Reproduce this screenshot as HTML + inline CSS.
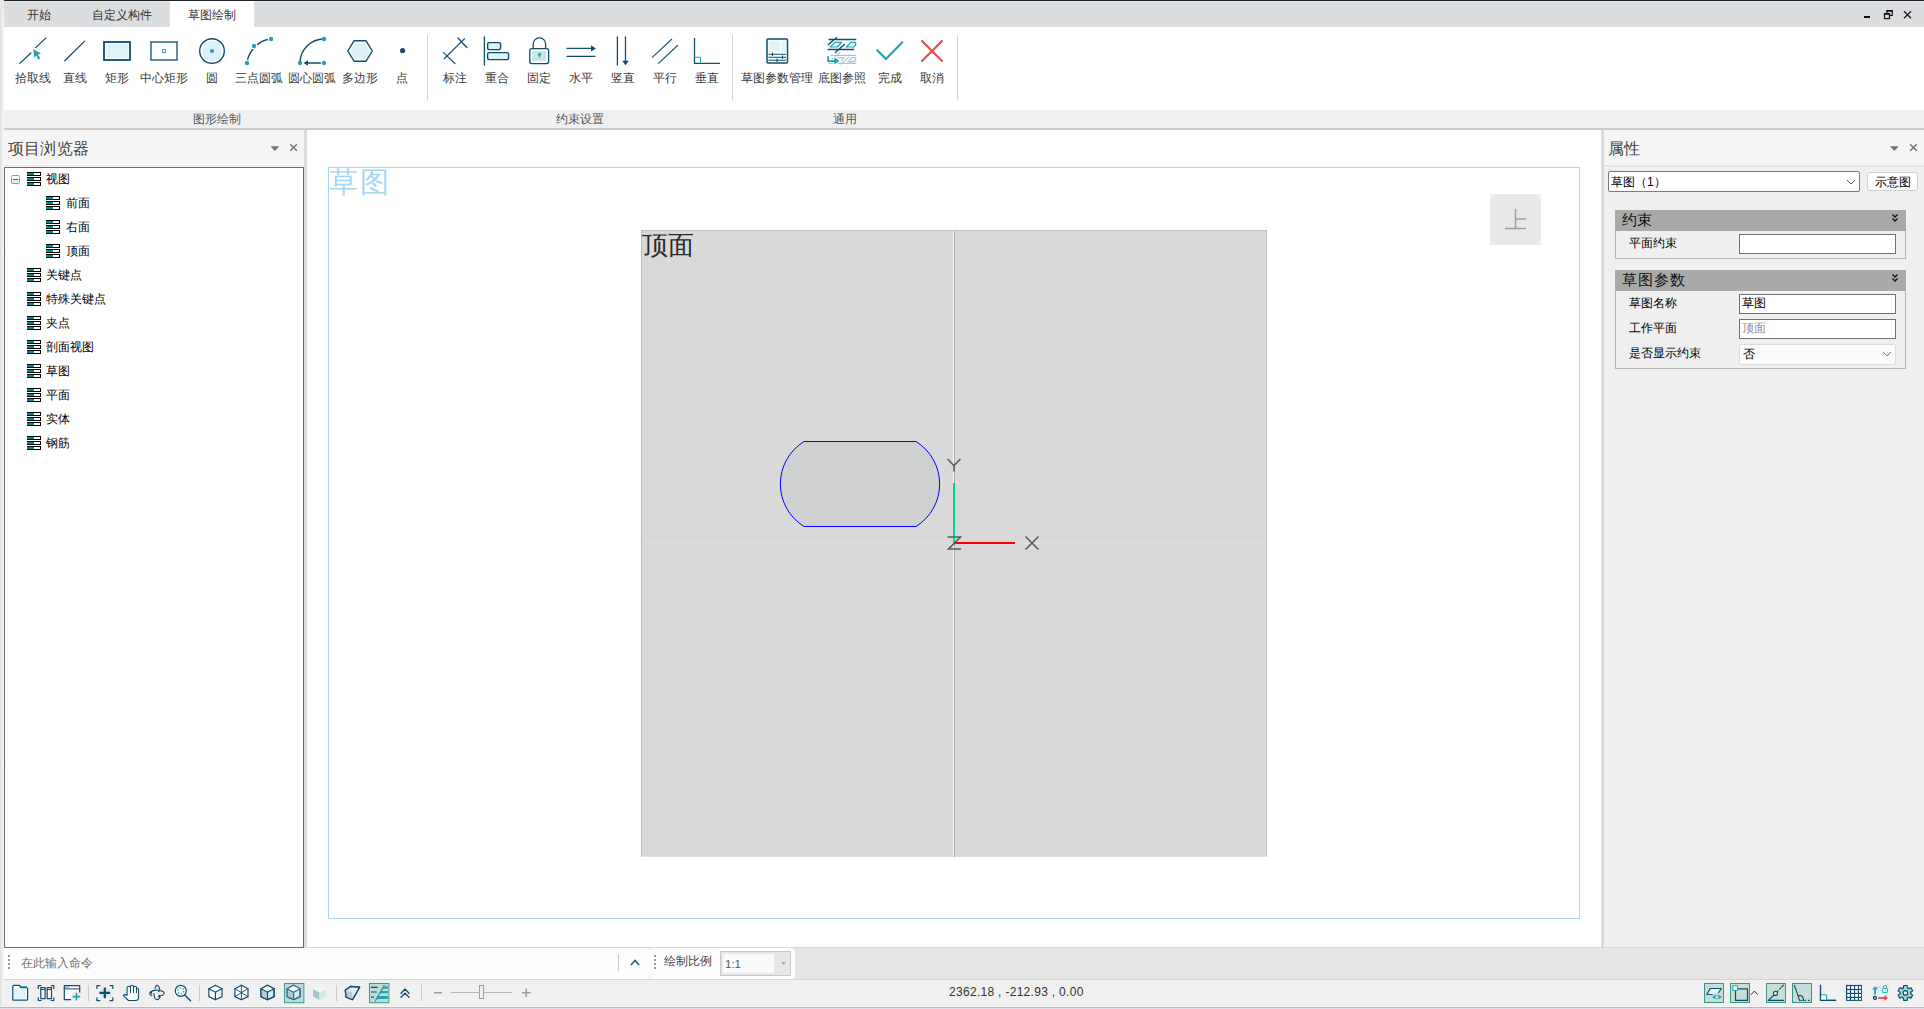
<!DOCTYPE html>
<html><head><meta charset="utf-8">
<style>
*{box-sizing:border-box;margin:0;padding:0}
html,body{width:1924px;height:1009px;overflow:hidden}
body{position:relative;background:#f0f0f0;font-family:"Liberation Sans",sans-serif;font-size:12px;color:#222}
.a{position:absolute}
.t{position:absolute;white-space:nowrap;line-height:1}
svg{position:absolute;overflow:visible}
</style></head><body>
<!-- window frame -->
<div class="a" style="left:0;top:0;width:4px;height:1009px;background:linear-gradient(to right,#dadada,#ececec 40%,#f5f5f5)"></div>
<div class="a" style="left:0;top:0;width:4px;height:9px;background:#e7e7e7"></div>
<div class="a" style="left:4px;top:0;width:1920px;height:1px;background:#1c2127"></div>
<!-- tab bar -->
<div class="a" id="tabbar" style="left:4px;top:1px;width:1920px;height:26px;background:#dcdddf"></div>
<div class="a" style="left:4px;top:1px;width:1920px;height:1px;background:#e4e5e7"></div>
<div class="a" style="left:170px;top:1px;width:84px;height:26px;background:#fff"></div>
<div class="t" style="left:27px;top:9px;font-size:12px;color:#333">开始</div>
<div class="t" style="left:92px;top:9px;font-size:12px;color:#333">自定义构件</div>
<div class="t" style="left:188px;top:9px;font-size:12px;color:#333">草图绘制</div>
<!-- ribbon -->
<div class="a" id="ribbon" style="left:4px;top:27px;width:1920px;height:83px;background:#fff"></div>
<div class="a" style="left:4px;top:110px;width:1920px;height:18px;background:#eef0f1"></div>
<div class="a" style="left:4px;top:128px;width:1920px;height:2px;background:#cbcbcb"></div>

<!-- ribbon icons -->
<svg style="left:0;top:0" width="1924" height="110" viewBox="0 0 1924 110">
<g fill="none" stroke="#0f4c6e" stroke-width="1.3" stroke-linecap="round" stroke-linejoin="round">
 <!-- pick line -->
 <path d="M19.8 63.4L30.9 53M35.7 47.6L45.8 38.1"/>
 <!-- line -->
 <path d="M64.7 60.7L84.7 41.1"/>
 <!-- rect -->
 <rect x="104" y="42" width="26" height="18" stroke-width="1.8" stroke-linecap="butt" stroke-linejoin="miter"/>
 <!-- center rect -->
 <rect x="151" y="42" width="26" height="18" stroke-linejoin="miter"/>
 <!-- circle -->
 <circle cx="212" cy="51" r="12.3" stroke-width="1.4"/>
 <!-- 3 point arc -->
 <path d="M247 63C248 52 258 40 271 39" stroke-width="1.4"/>
 <!-- center arc -->
 <path d="M300 63A24 24 0 0 1 324 39" stroke-width="1.4"/>
 <path d="M320.5 63H306" stroke-width="1.5"/>
 <!-- hexagon -->
 <path d="M347.8 51L354.2 40.7H365.9L372.3 51L365.9 61.3H354.2Z" stroke-width="1.4"/>
 <!-- dimension -->
 <path d="M444.2 58.7L464.6 38.6M443.5 52.6L455.1 63.6M458 38L466.8 47.5" stroke-width="1.2"/>
 <!-- coincident -->
 <path d="M484.4 37V65"/>
 <rect x="487.6" y="42.6" width="13" height="7" rx="1.5" fill="#dff6f8" stroke-width="1.4"/>
 <rect x="487.6" y="52.6" width="21" height="7" rx="1.5" fill="#dff6f8" stroke-width="1.4"/>
 <!-- lock -->
 <path d="M533.2 48.5V44A6.2 6.2 0 0 1 545.6 44V48.5"/>
 <rect x="529.8" y="48.6" width="18.8" height="15" rx="2"/>
 <!-- horizontal -->
 <path d="M567 48.4H591.5M567 56.3H595"/>
 <!-- vertical -->
 <path d="M617.4 37V65M625.5 37V61.5"/>
 <!-- parallel -->
 <path d="M652.3 57.4L671.7 39.3M658.5 63.4L677.5 45.5" stroke-width="1.2" stroke="#1d5a7c"/>
 <!-- perpendicular -->
 <path d="M694.5 38V63.4H720" stroke-linecap="butt"/>
 <!-- sketch params -->
 <rect x="767" y="39" width="20.5" height="24" rx="1" stroke-width="1.5"/>
 <path d="M768.5 54.2H786M768.5 57.3H786M768.5 60.3H786M772.5 52.5V56M782.5 55.5V59M777 58.5V62" stroke-width="1.1" stroke-linecap="butt"/>
 <!-- underlay -->
 <path d="M829.1 39.5H855.7M828.2 49.5H853.6M828.2 44.7L836.6 37.4M835.4 52.5L844.5 44.3" stroke-width="1.3"/>
</g>
<g fill="#dff6f8" stroke="none">
 <rect x="106" y="44" width="22" height="14"/>
 <circle cx="212" cy="51" r="10.2" fill="#dff1f8"/>
 <path d="M350.2 51L355.3 42.7H364.8L369.9 51L364.8 59.3H355.3Z" fill="#dff1f8"/>
 <rect x="768.5" y="40.5" width="11.5" height="11.5"/>
 <rect x="781.5" y="40.5" width="4.5" height="11.5"/>
 <rect x="532.2" y="51" width="14" height="10.2" rx="1" fill="#c8e5e9"/>
</g>
<g fill="#0f4c6e">
 <circle cx="402.6" cy="50.5" r="2.6"/>
 <path d="M303.6 63L308 60.3V65.7Z"/>
 <path d="M591 45.3L595.8 48.4L591 51.5Z"/>
 <path d="M622.2 60.8H628.8L625.5 65.3Z"/>
</g>
<g fill="#22a3ae">
 <path d="M33.2 49L41 53.6L38 54.6L40.3 58.4L38.3 59.5L36.2 55.6L34.3 58Z"/>
 <rect x="162.6" y="49.6" width="3" height="3" fill="none" stroke="#22a3ae" stroke-width="1"/>
 <circle cx="212" cy="51" r="2.1"/>
 <circle cx="247" cy="63" r="3.3" fill="#fff"/><circle cx="254" cy="46" r="3.3" fill="#fff"/><circle cx="271" cy="39" r="3.3" fill="#fff"/>
 <circle cx="247" cy="63" r="2.2"/><circle cx="254" cy="46" r="2.2"/><circle cx="271" cy="39" r="2.2"/>
 <circle cx="300" cy="63" r="2.2"/><circle cx="324" cy="63" r="2.2"/><circle cx="324" cy="39" r="2.2"/>
 <circle cx="539.5" cy="54.2" r="1.5"/><rect x="538.9" y="54.5" width="1.3" height="3"/>
 <path d="M694.5 57.3H700.5V63.4" fill="none" stroke="#22a3ae" stroke-width="1"/>
 <path d="M830.2 47L834.8 42.3H841.6L837.3 47Z M846.3 47L850.9 42.3H855.7V45.2L853.4 47Z" fill="#e3f7f9" stroke="#22a3ae" stroke-width="1.2" stroke-linejoin="round"/>
 <path d="M828.2 56.3V61.2H835" fill="none" stroke="#22a3ae" stroke-width="1.8"/>
 <path d="M834.3 57.2L839.5 60.9L834.3 64.6Z"/>
 <circle cx="832.3" cy="58.4" r="0.6"/>
</g>
<g fill="none" stroke="#a9c4d2" stroke-width="1.1" stroke-linecap="round">
 <path d="M834.1 55.4H855.7M831 55.4H833M838.4 63.4H855.7M829 63.4H832.7M840.6 64.1L848.6 57.3M835.4 56.3L839.7 52.3"/>
 <path d="M848.2 61.6L852 57.5H855.7V60.2L854.1 61.6Z M837.3 57.5H843.8L841.4 60.5" fill="#eefafb"/>
</g>
<path d="M877.2 50.2L885.9 58.9L902.3 42.2" fill="none" stroke="#27a6b0" stroke-width="2.2" stroke-linecap="round" stroke-linejoin="miter"/>
<path d="M922 41L942 61M942 41L922 61" fill="none" stroke="#e84c4c" stroke-width="2.2" stroke-linecap="round"/>
<g fill="#d4d4d4"><rect x="427" y="35" width="1" height="65"/><rect x="732" y="35" width="1" height="65"/><rect x="957" y="35" width="1" height="65"/></g>
</svg>
<div class="t" style="left:15px;top:72px;color:#3a3a3a">拾取线</div>
<div class="t" style="left:63px;top:72px;color:#3a3a3a">直线</div>
<div class="t" style="left:105px;top:72px;color:#3a3a3a">矩形</div>
<div class="t" style="left:140px;top:72px;color:#3a3a3a">中心矩形</div>
<div class="t" style="left:206px;top:72px;color:#3a3a3a">圆</div>
<div class="t" style="left:235px;top:72px;color:#3a3a3a">三点圆弧</div>
<div class="t" style="left:288px;top:72px;color:#3a3a3a">圆心圆弧</div>
<div class="t" style="left:342px;top:72px;color:#3a3a3a">多边形</div>
<div class="t" style="left:396px;top:72px;color:#3a3a3a">点</div>
<div class="t" style="left:443px;top:72px;color:#3a3a3a">标注</div>
<div class="t" style="left:485px;top:72px;color:#3a3a3a">重合</div>
<div class="t" style="left:527px;top:72px;color:#3a3a3a">固定</div>
<div class="t" style="left:569px;top:72px;color:#3a3a3a">水平</div>
<div class="t" style="left:611px;top:72px;color:#3a3a3a">竖直</div>
<div class="t" style="left:653px;top:72px;color:#3a3a3a">平行</div>
<div class="t" style="left:695px;top:72px;color:#3a3a3a">垂直</div>
<div class="t" style="left:741px;top:72px;color:#3a3a3a">草图参数管理</div>
<div class="t" style="left:818px;top:72px;color:#3a3a3a">底图参照</div>
<div class="t" style="left:878px;top:72px;color:#3a3a3a">完成</div>
<div class="t" style="left:920px;top:72px;color:#3a3a3a">取消</div>
<div class="t" style="left:193px;top:113px;color:#555">图形绘制</div>
<div class="t" style="left:556px;top:113px;color:#555">约束设置</div>
<div class="t" style="left:833px;top:113px;color:#555">通用</div>
<!-- left panel -->
<div class="a" style="left:4px;top:130px;width:300px;height:818px;background:#f5f5f5"></div>
<div class="a" style="left:4px;top:165px;width:300px;height:1px;background:#e6e6e6"></div>
<div class="t" style="left:8px;top:141px;font-size:16px;letter-spacing:0.2px;color:#444">项目浏览器</div>
<div class="a" style="left:4px;top:167px;width:300px;height:781px;background:#fff;border:1px solid #6b6b6b"></div>
<!-- tree -->
<svg style="left:27px;top:172px" width="14" height="14" viewBox="0 0 14 14" shape-rendering="crispEdges"><rect x="0" y="0" width="14" height="4" fill="#000"/><rect x="0" y="1" width="7" height="2" fill="#008c8c"/><rect x="7" y="1" width="6" height="2" fill="#fff"/><rect x="0" y="5" width="14" height="4" fill="#000"/><rect x="0" y="6" width="7" height="2" fill="#008c8c"/><rect x="7" y="6" width="6" height="2" fill="#fff"/><rect x="0" y="10" width="14" height="4" fill="#000"/><rect x="0" y="11" width="7" height="2" fill="#008c8c"/><rect x="7" y="11" width="6" height="2" fill="#fff"/></svg>
<div class="t" style="left:46px;top:173px;color:#000">视图</div>
<svg style="left:46px;top:196px" width="14" height="14" viewBox="0 0 14 14" shape-rendering="crispEdges"><rect x="0" y="0" width="14" height="4" fill="#000"/><rect x="0" y="1" width="7" height="2" fill="#008c8c"/><rect x="7" y="1" width="6" height="2" fill="#fff"/><rect x="0" y="5" width="14" height="4" fill="#000"/><rect x="0" y="6" width="7" height="2" fill="#008c8c"/><rect x="7" y="6" width="6" height="2" fill="#fff"/><rect x="0" y="10" width="14" height="4" fill="#000"/><rect x="0" y="11" width="7" height="2" fill="#008c8c"/><rect x="7" y="11" width="6" height="2" fill="#fff"/></svg>
<div class="t" style="left:66px;top:197px;color:#000">前面</div>
<svg style="left:46px;top:220px" width="14" height="14" viewBox="0 0 14 14" shape-rendering="crispEdges"><rect x="0" y="0" width="14" height="4" fill="#000"/><rect x="0" y="1" width="7" height="2" fill="#008c8c"/><rect x="7" y="1" width="6" height="2" fill="#fff"/><rect x="0" y="5" width="14" height="4" fill="#000"/><rect x="0" y="6" width="7" height="2" fill="#008c8c"/><rect x="7" y="6" width="6" height="2" fill="#fff"/><rect x="0" y="10" width="14" height="4" fill="#000"/><rect x="0" y="11" width="7" height="2" fill="#008c8c"/><rect x="7" y="11" width="6" height="2" fill="#fff"/></svg>
<div class="t" style="left:66px;top:221px;color:#000">右面</div>
<svg style="left:46px;top:244px" width="14" height="14" viewBox="0 0 14 14" shape-rendering="crispEdges"><rect x="0" y="0" width="14" height="4" fill="#000"/><rect x="0" y="1" width="7" height="2" fill="#008c8c"/><rect x="7" y="1" width="6" height="2" fill="#fff"/><rect x="0" y="5" width="14" height="4" fill="#000"/><rect x="0" y="6" width="7" height="2" fill="#008c8c"/><rect x="7" y="6" width="6" height="2" fill="#fff"/><rect x="0" y="10" width="14" height="4" fill="#000"/><rect x="0" y="11" width="7" height="2" fill="#008c8c"/><rect x="7" y="11" width="6" height="2" fill="#fff"/></svg>
<div class="t" style="left:66px;top:245px;color:#000">顶面</div>
<svg style="left:27px;top:268px" width="14" height="14" viewBox="0 0 14 14" shape-rendering="crispEdges"><rect x="0" y="0" width="14" height="4" fill="#000"/><rect x="0" y="1" width="7" height="2" fill="#008c8c"/><rect x="7" y="1" width="6" height="2" fill="#fff"/><rect x="0" y="5" width="14" height="4" fill="#000"/><rect x="0" y="6" width="7" height="2" fill="#008c8c"/><rect x="7" y="6" width="6" height="2" fill="#fff"/><rect x="0" y="10" width="14" height="4" fill="#000"/><rect x="0" y="11" width="7" height="2" fill="#008c8c"/><rect x="7" y="11" width="6" height="2" fill="#fff"/></svg>
<div class="t" style="left:46px;top:269px;color:#000">关键点</div>
<svg style="left:27px;top:292px" width="14" height="14" viewBox="0 0 14 14" shape-rendering="crispEdges"><rect x="0" y="0" width="14" height="4" fill="#000"/><rect x="0" y="1" width="7" height="2" fill="#008c8c"/><rect x="7" y="1" width="6" height="2" fill="#fff"/><rect x="0" y="5" width="14" height="4" fill="#000"/><rect x="0" y="6" width="7" height="2" fill="#008c8c"/><rect x="7" y="6" width="6" height="2" fill="#fff"/><rect x="0" y="10" width="14" height="4" fill="#000"/><rect x="0" y="11" width="7" height="2" fill="#008c8c"/><rect x="7" y="11" width="6" height="2" fill="#fff"/></svg>
<div class="t" style="left:46px;top:293px;color:#000">特殊关键点</div>
<svg style="left:27px;top:316px" width="14" height="14" viewBox="0 0 14 14" shape-rendering="crispEdges"><rect x="0" y="0" width="14" height="4" fill="#000"/><rect x="0" y="1" width="7" height="2" fill="#008c8c"/><rect x="7" y="1" width="6" height="2" fill="#fff"/><rect x="0" y="5" width="14" height="4" fill="#000"/><rect x="0" y="6" width="7" height="2" fill="#008c8c"/><rect x="7" y="6" width="6" height="2" fill="#fff"/><rect x="0" y="10" width="14" height="4" fill="#000"/><rect x="0" y="11" width="7" height="2" fill="#008c8c"/><rect x="7" y="11" width="6" height="2" fill="#fff"/></svg>
<div class="t" style="left:46px;top:317px;color:#000">夹点</div>
<svg style="left:27px;top:340px" width="14" height="14" viewBox="0 0 14 14" shape-rendering="crispEdges"><rect x="0" y="0" width="14" height="4" fill="#000"/><rect x="0" y="1" width="7" height="2" fill="#008c8c"/><rect x="7" y="1" width="6" height="2" fill="#fff"/><rect x="0" y="5" width="14" height="4" fill="#000"/><rect x="0" y="6" width="7" height="2" fill="#008c8c"/><rect x="7" y="6" width="6" height="2" fill="#fff"/><rect x="0" y="10" width="14" height="4" fill="#000"/><rect x="0" y="11" width="7" height="2" fill="#008c8c"/><rect x="7" y="11" width="6" height="2" fill="#fff"/></svg>
<div class="t" style="left:46px;top:341px;color:#000">剖面视图</div>
<svg style="left:27px;top:364px" width="14" height="14" viewBox="0 0 14 14" shape-rendering="crispEdges"><rect x="0" y="0" width="14" height="4" fill="#000"/><rect x="0" y="1" width="7" height="2" fill="#008c8c"/><rect x="7" y="1" width="6" height="2" fill="#fff"/><rect x="0" y="5" width="14" height="4" fill="#000"/><rect x="0" y="6" width="7" height="2" fill="#008c8c"/><rect x="7" y="6" width="6" height="2" fill="#fff"/><rect x="0" y="10" width="14" height="4" fill="#000"/><rect x="0" y="11" width="7" height="2" fill="#008c8c"/><rect x="7" y="11" width="6" height="2" fill="#fff"/></svg>
<div class="t" style="left:46px;top:365px;color:#000">草图</div>
<svg style="left:27px;top:388px" width="14" height="14" viewBox="0 0 14 14" shape-rendering="crispEdges"><rect x="0" y="0" width="14" height="4" fill="#000"/><rect x="0" y="1" width="7" height="2" fill="#008c8c"/><rect x="7" y="1" width="6" height="2" fill="#fff"/><rect x="0" y="5" width="14" height="4" fill="#000"/><rect x="0" y="6" width="7" height="2" fill="#008c8c"/><rect x="7" y="6" width="6" height="2" fill="#fff"/><rect x="0" y="10" width="14" height="4" fill="#000"/><rect x="0" y="11" width="7" height="2" fill="#008c8c"/><rect x="7" y="11" width="6" height="2" fill="#fff"/></svg>
<div class="t" style="left:46px;top:389px;color:#000">平面</div>
<svg style="left:27px;top:412px" width="14" height="14" viewBox="0 0 14 14" shape-rendering="crispEdges"><rect x="0" y="0" width="14" height="4" fill="#000"/><rect x="0" y="1" width="7" height="2" fill="#008c8c"/><rect x="7" y="1" width="6" height="2" fill="#fff"/><rect x="0" y="5" width="14" height="4" fill="#000"/><rect x="0" y="6" width="7" height="2" fill="#008c8c"/><rect x="7" y="6" width="6" height="2" fill="#fff"/><rect x="0" y="10" width="14" height="4" fill="#000"/><rect x="0" y="11" width="7" height="2" fill="#008c8c"/><rect x="7" y="11" width="6" height="2" fill="#fff"/></svg>
<div class="t" style="left:46px;top:413px;color:#000">实体</div>
<svg style="left:27px;top:436px" width="14" height="14" viewBox="0 0 14 14" shape-rendering="crispEdges"><rect x="0" y="0" width="14" height="4" fill="#000"/><rect x="0" y="1" width="7" height="2" fill="#008c8c"/><rect x="7" y="1" width="6" height="2" fill="#fff"/><rect x="0" y="5" width="14" height="4" fill="#000"/><rect x="0" y="6" width="7" height="2" fill="#008c8c"/><rect x="7" y="6" width="6" height="2" fill="#fff"/><rect x="0" y="10" width="14" height="4" fill="#000"/><rect x="0" y="11" width="7" height="2" fill="#008c8c"/><rect x="7" y="11" width="6" height="2" fill="#fff"/></svg>
<div class="t" style="left:46px;top:437px;color:#000">钢筋</div>
<div class="a" style="left:11px;top:175px;width:9px;height:9px;border:1px solid #9a9a9a;border-radius:1.5px;background:linear-gradient(#fff,#e6e6e6)"></div><div class="a" style="left:13px;top:179px;width:5px;height:1px;background:#3b55b5"></div>
<svg style="left:0;top:0" width="1924" height="200"><path d="M270.5 146.2H279.2L274.85 151Z" fill="#707070"/><path d="M290.3 144.2L296.8 150.7M296.8 144.2L290.3 150.7" stroke="#707070" stroke-width="1.3" fill="none"/></svg>
<div class="a" style="left:304px;top:130px;width:3px;height:818px;background:#dcdcdc"></div>
<!-- canvas -->
<div class="a" style="left:307px;top:130px;width:1294px;height:818px;background:#fff"></div>
<div class="a" style="left:328px;top:167px;width:1252px;height:752px;border:1px solid #a8d8f0"></div>
<div class="a" style="left:641px;top:230px;width:626px;height:627px;background:#d9d9d9;border-top:1px solid #c0c0b8;border-left:1px solid #bdbdb5;border-right:1px solid #bdbdb8;border-bottom:1px solid #e0e0d8"></div>

<div class="t" style="left:329px;top:168px;font-size:28.5px;letter-spacing:2px;color:#a8d8f0">草图</div>
<div class="t" style="left:642px;top:232px;font-size:26px;color:#2a2a2a">顶面</div>
<svg style="left:0;top:0" width="1924" height="1009" viewBox="0 0 1924 1009">
 <rect x="953" y="231" width="1" height="625" fill="#fbfbf2"/>
 <rect x="954" y="231" width="1" height="626" fill="#a9a9a9"/>
 <rect x="642" y="543" width="624" height="1" fill="#e0e0d8"/>
 <path d="M804 441.5H916A50 50 0 0 1 916 526.5H804A50 50 0 0 1 804 441.5Z" fill="#cfd0d2" stroke="#0000ff" stroke-width="1"/>
 <rect x="953" y="483" width="2" height="60" fill="#00d49a"/>
 <rect x="954" y="542" width="61" height="2" fill="#ff0000"/>
 <g fill="none" stroke="#5c5c5c" stroke-width="1.6">
  <path d="M947.5 459L954 465.5L960.5 459M954 465.5V471.5"/>
  <path d="M947.5 537H960.5L948.5 549H961"/>
  <path d="M1025.5 536.5L1038.5 549.5M1038.5 536.5L1025.5 549.5"/>
 </g>
 <rect x="1490" y="194" width="51" height="51" fill="#e8e8e8"/>
 <path d="M1490 194h6l-6 6zM1541 194h-6l6 6zM1490 245h6l-6 -6zM1541 245h-6l6 -6z" fill="#eeeeee"/>
 <path d="M1515.5 209V228.5M1515.5 219H1526M1505 228.5H1526" stroke="#a0a0a0" stroke-width="1.5" fill="none"/>
</svg>
<div class="a" style="left:1601px;top:130px;width:3px;height:818px;background:#d9d9d9"></div>
<!-- right panel -->
<div class="a" style="left:1604px;top:130px;width:320px;height:818px;background:#efefef"></div>
<div class="a" style="left:1604px;top:130px;width:320px;height:35px;background:#f5f5f5"></div>
<div class="a" style="left:1604px;top:165px;width:320px;height:2px;background:#e4e4e4"></div>
<div class="t" style="left:1608px;top:141px;font-size:16px;letter-spacing:0.2px;color:#444">属性</div>
<svg style="left:0;top:0" width="1924" height="200"><path d="M1890 146.2H1898.7L1894.35 151Z" fill="#707070"/><path d="M1910.2 144.2L1916.7 150.7M1916.7 144.2L1910.2 150.7" stroke="#707070" stroke-width="1.3" fill="none"/></svg>

<div class="a" style="left:1608px;top:171px;width:252px;height:21px;background:#fff;border:1px solid #7a7a7a;border-radius:2px"></div>
<div class="t" style="left:1611px;top:176px;color:#000">草图（1）</div>
<div class="a" style="left:1867px;top:172px;width:51px;height:19px;background:#fdfdfd;border:1px solid #cfcfcf;border-radius:3px"></div>
<div class="t" style="left:1875px;top:176px;color:#000">示意图</div>
<!-- group 1 -->
<div class="a" style="left:1615px;top:210px;width:291px;height:49px;border:1px solid #b4b4b4;background:#efefef"></div>
<div class="a" style="left:1615px;top:210px;width:291px;height:21px;background:#a9a9a9"></div>
<div class="t" style="left:1622px;top:213px;font-size:14.5px;color:#111">约束</div>
<div class="t" style="left:1629px;top:237px;color:#000">平面约束</div>
<div class="a" style="left:1739px;top:234px;width:157px;height:20px;border:1px solid #707070;background:#fff"></div>
<!-- group 2 -->
<div class="a" style="left:1615px;top:270px;width:291px;height:99px;border:1px solid #b4b4b4;background:#efefef"></div>
<div class="a" style="left:1615px;top:270px;width:291px;height:21px;background:#a9a9a9"></div>
<div class="t" style="left:1622px;top:273px;font-size:14.5px;letter-spacing:1px;color:#111">草图参数</div>
<div class="t" style="left:1629px;top:297px;color:#000">草图名称</div>
<div class="a" style="left:1739px;top:294px;width:157px;height:20px;border:1px solid #707070;background:#fff"></div>
<div class="t" style="left:1742px;top:297px;color:#000">草图</div>
<div class="t" style="left:1629px;top:322px;color:#000">工作平面</div>
<div class="a" style="left:1739px;top:319px;width:157px;height:20px;border:1px solid #707070;background:#fff"></div>
<div class="t" style="left:1742px;top:322px;color:#8a8a8a">顶面</div>
<div class="t" style="left:1629px;top:347px;color:#000">是否显示约束</div>
<div class="a" style="left:1739px;top:344px;width:157px;height:21px;border:1px solid #dcdcdc;border-radius:2px;background:#fbfbfb"></div>
<div class="t" style="left:1743px;top:348px;color:#000">否</div>
<svg style="left:0;top:0" width="1924" height="400">
 <path d="M1847 180L1851 184L1855 180" stroke="#555" stroke-width="1" fill="none"/>
 <path d="M1883 352L1887 356L1891 352" stroke="#777" stroke-width="1" fill="none"/>
 <path d="M1892.5 214.5L1895 217L1897.5 214.5M1892.5 218.5L1895 221L1897.5 218.5" stroke="#111" stroke-width="1.3" fill="none"/>
 <path d="M1892.5 274.5L1895 277L1897.5 274.5M1892.5 278.5L1895 281L1897.5 278.5" stroke="#111" stroke-width="1.3" fill="none"/>
</svg>
<!-- command bar -->
<div class="a" style="left:304px;top:947px;width:1620px;height:1px;background:#d8d8d8"></div>
<div class="a" style="left:4px;top:948px;width:1920px;height:31px;background:#e5e5e5"></div>
<div class="a" style="left:4px;top:948px;width:645px;height:31px;background:#fdfdfd"></div>
<div class="a" style="left:649px;top:948px;width:146px;height:31px;background:#fdfdfd;border-radius:4px"></div>
<div class="a" style="left:4px;top:979px;width:1920px;height:1px;background:#d4d4d4"></div>
<!-- status bar -->
<div class="a" style="left:4px;top:980px;width:1920px;height:29px;background:#f0f0f0"></div>
<div class="a" style="left:0;top:1006px;width:1924px;height:1px;background:#f8f8f8"></div><div class="a" style="left:0;top:1007px;width:1924px;height:1px;background:#b9b5bf"></div><div class="a" style="left:0;top:1008px;width:1924px;height:1px;background:#e1dcea"></div>

<svg style="left:0;top:0" width="1924" height="1009">
 <g fill="#9a9a9a"><rect x="8" y="955" width="2" height="2"/><rect x="8" y="959" width="2" height="2"/><rect x="8" y="963" width="2" height="2"/><rect x="8" y="967" width="2" height="2"/>
 <rect x="654" y="955" width="2" height="2"/><rect x="654" y="959" width="2" height="2"/><rect x="654" y="963" width="2" height="2"/><rect x="654" y="967" width="2" height="2"/></g>
 <rect x="618" y="954" width="1" height="17" fill="#c8c8c8"/>
 <path d="M631 965L635 960.5L639 965" stroke="#2b5a78" stroke-width="1.5" fill="none"/>
 <rect x="720.5" y="951.5" width="70" height="24" fill="#e6e6e6" stroke="#c8c8c8"/>
 <rect x="723" y="954" width="51" height="19" fill="#fafafa"/>
 <path d="M781 962H786L783.5 965Z" fill="#a8a8a8"/>
</svg>
<div class="t" style="left:21px;top:957px;color:#707070">在此输入命令</div>
<div class="t" style="left:664px;top:955px;color:#444">绘制比例</div>
<div class="t" style="left:725px;top:958.5px;font-size:11.5px;color:#555">1:1</div>
<div class="t" style="left:949px;top:986px;color:#333;letter-spacing:0.3px">2362.18 , -212.93 , 0.00</div>

<!-- status bar icons -->
<svg style="left:0;top:0" width="1924" height="1009" viewBox="0 0 1924 1009">
<g fill="none" stroke="#0f4c6e" stroke-width="1.2" stroke-linejoin="round" stroke-linecap="round">
 <path d="M13.8 1000.2H26.6A1 1 0 0 0 27.6 999.2V988.6A1 1 0 0 0 26.6 987.6H20.3V986.4A1 1 0 0 0 19.3 985.4H13.8A1 1 0 0 0 12.8 986.4V999.2A1 1 0 0 0 13.8 1000.2Z" fill="#fff"/>
 <path d="M38.3 988.4V985.6H41M51.3 985.6H53.8V988.4M53.8 997.8V1000.5H51.3M41 1000.5H38.3V997.8"/>
 <rect x="40.8" y="987.6" width="4.3" height="11" fill="#fff"/><rect x="47.2" y="987.6" width="4.3" height="11" fill="#fff"/>
 <path d="M40.8 989.6H45.1M47.2 989.6H51.5" stroke-width="1"/>
 <path d="M79.7 993V985.6H64.3V999.7H72" fill="#fff"/>
 <path d="M64.3 988.9H79.7" stroke-width="1"/>
 <path d="M96.9 988.4V985.6H99.8M110 985.6H112.8V988.4M112.8 997.8V1000.6H110M99.8 1000.6H96.9V997.8"/>
 <path d="M123.3 995.3L128.4 1000.5H135.5Q138.5 1000.5 138.5 997.2V989.6Q138.5 988.2 137.5 988.2Q136.5 988.2 136.5 989V987.6Q136.5 986.3 135 986.3Q133.5 986.3 133.5 987.4V986.6Q133.5 985.2 132 985.2Q130.5 985.2 130.5 986.6V987.6Q130.5 986.3 128.8 986.3Q127.1 986.3 127.1 987.8V995.3Q125.3 993.9 123.3 995.3Z" fill="#fff" stroke-width="1.1"/>
 <path d="M130.5 987.2V992.7M133.5 987.2V992.7M136.5 988.8V992.7" stroke-width="1"/>
 <path d="M151.8 995.8C148 994 149.2 990.5 157 990.1" stroke-width="1.1"/>
 <path d="M160.8 990.6C165.8 992 165 995.5 158.6 996.2" stroke-width="1.1"/>
 <path d="M155 988.5C156 983.5 159.6 984.5 159.8 991" stroke-width="1.1"/>
 <path d="M154 993.5C154 999.5 157.5 1002 160 997" stroke-width="1.1"/>
 <circle cx="180.8" cy="990.9" r="5.5" fill="#fff"/>
 <path d="M184.8 995L190.6 1000.7" stroke-width="1.4"/>
 <path d="M215.4 985.2L222 988.7V996.6L215.4 999.7L208.9 996.6V988.7Z" fill="#fff"/>
 <path d="M208.9 988.7L215.4 992.2L222 988.7M215.4 992.2V999.7"/>
 <path d="M241.4 985.2L248 988.7V996.6L241.4 999.7L234.9 996.6V988.7Z" fill="#fff"/>
 <path d="M234.9 988.7L248 996.6M248 988.7L234.9 996.6M241.4 985.2V999.7" stroke-width="0.9"/>
 <path d="M267.5 985.2L274.1 988.7V996.6L267.5 999.7L261 996.6V988.7Z" fill="#d8eef2"/>
 <path d="M261 988.7L267.5 992.2V999.7L261 996.6Z" fill="#b8cdd6" stroke="none"/>
 <path d="M267.5 985.2L274.1 988.7L267.5 992.2L261 988.7Z" fill="#fff" stroke="none"/>
 <path d="M267.5 985.2L274.1 988.7V996.6L267.5 999.7L261 996.6V988.7Z"/>
 <path d="M261 988.7L267.5 992.2L274.1 988.7M267.5 992.2V999.7"/>
</g>
<path d="M14.2 989.2H26.2V998.8H14.2Z" fill="#dff6f8"/>
<path d="M149.8 993L152 991.6L152.2 994.6Z" fill="#0f4c6e"/>
<path d="M160 990.9L157.6 989L158 992.2Z" fill="#0f4c6e"/>
<path d="M157.5 996.3L160.2 994.6L160.3 997.6Z" fill="#0f4c6e"/>
<rect x="284.5" y="983.5" width="19.4" height="19.2" fill="#bddcd7" stroke="#3f9a8c" stroke-width="1"/>
<g fill="none" stroke="#2f6f92" stroke-width="1.2" stroke-linejoin="round">
 <path d="M293.6 985.2L300.1 988.7V996.6L293.6 999.7L287.1 996.6V988.7Z" fill="#d2ebf0"/>
 <path d="M287.1 988.7L293.6 992.2V999.7L287.1 996.6Z" fill="#b2c8d0" stroke="none"/>
 <path d="M293.6 985.2L300.1 988.7L293.6 992.2L287.1 988.7Z" fill="#fff" stroke="none"/>
 <path d="M293.6 985.2L300.1 988.7V996.6L293.6 999.7L287.1 996.6V988.7Z"/>
 <path d="M287.1 988.7L293.6 992.2L300.1 988.7M293.6 992.2V999.7"/>
</g>
<path d="M319.5 985.8L326 989.2L319.5 992.6L313 989.2Z" fill="#eef9fa"/>
<path d="M313 989.2L319.5 992.6V999.9L313 996.6Z" fill="#a9c3ca"/>
<path d="M326 989.2L319.5 992.6V999.9L326 996.6Z" fill="#cde7eb"/>
<g fill="none" stroke="#0f4c6e" stroke-width="1.2" stroke-linejoin="round" stroke-linecap="round">
 <path d="M345.2 990.3L350.8 986.3L359.7 987.2L352.5 999.7L346.2 997.3Z" fill="#dfeff3"/>
 <path d="M345.8 990.6L352.3 992.2L352.3 999.2L346.6 997Z" fill="#b6cbd3" stroke="none"/>
 <path d="M345.2 990.3L350.8 986.3L359.7 987.2L352.5 999.7L346.2 997.3Z"/>
 <path d="M401 993.2L405 989L409 993.2M401 997.3L405 993.1L409 997.3" stroke-width="1.3"/>
</g>
<rect x="369.5" y="983.5" width="19.4" height="19.2" fill="#bddcd7" stroke="#3f9a8c" stroke-width="1"/>
<g stroke="#0f4c6e" stroke-width="1.2"><path d="M371 987.4H377.8M371 992H376.8M371 997.2H374"/></g>
<path d="M375 1001.5L384.3 985.2" stroke="#22a3ae" stroke-width="1.4"/>
<g fill="#22a3ae"><path d="M383.6 986.3H387.8V988.7H382.3Z"/><path d="M380.9 991.1H387.8V993.3H379.6Z"/><path d="M378.2 996H387.8V998.9H376.6Z"/></g>
<g fill="#22a3ae">
 <rect x="20.8" y="986" width="6" height="1.5"/>
 <rect x="71" y="992.5" width="9.5" height="8.5" fill="#f0f0f0"/>
 <path d="M75.6 992.8H77.2V995.8H80.2V997.4H77.2V1000.4H75.6V997.4H72.6V995.8H75.6Z"/>
 <circle cx="104.8" cy="992.9" r="5" fill="#cfe9ec"/>
 <g stroke="#22a3ae" stroke-width="1.3" fill="none" stroke-dasharray="1.5 1.6"><circle cx="180.8" cy="990.9" r="3"/></g>
</g>
<g fill="#0f4c6e"><circle cx="66" cy="987.2" r="0.6"/><circle cx="68" cy="987.2" r="0.6"/>
<path d="M103.7 987.6H105.9V991.8H110.2V994H105.9V998.2H103.7V994H99.4V991.8H103.7Z"/></g>
<g fill="#c8c8c8"><rect x="88" y="985" width="1" height="16"/><rect x="199" y="985" width="1" height="16"/><rect x="336" y="985" width="1" height="16"/><rect x="421" y="985" width="1" height="16"/></g>
<!-- zoom slider -->
<g fill="#9c9c9c"><rect x="434" y="992" width="8" height="1.5"/><rect x="522" y="992" width="8.5" height="1.5"/><rect x="525.5" y="988.5" width="1.5" height="8.5"/></g>
<rect x="451" y="992" width="61" height="1" fill="#b4b4b4"/>
<rect x="479.5" y="985.5" width="4" height="13" fill="#f0f0f0" stroke="#a0a0a0" stroke-width="1"/>
<!-- right status icons -->
<g stroke="#3a9580" stroke-width="1" fill="#c5ded8">
 <rect x="1704.5" y="983.5" width="19" height="19"/>
 <rect x="1730.5" y="983.5" width="19" height="19"/>
 <rect x="1766.5" y="983.5" width="19" height="19"/>
 <rect x="1792.5" y="983.5" width="19" height="19"/>
</g>
<g fill="none" stroke="#0f4c6e" stroke-width="1.2" stroke-linejoin="round" stroke-linecap="round">
 <path d="M1712.3 994.5H1706.9L1710.2 988.5H1721.3L1718.6 992.5" fill="#e0f8f8"/>
 <path d="M1735.5 988.8H1747.5V1000.4H1735.5Z"/>
 <path d="M1768.3 1000.4H1783.6M1768.3 1000.4L1774 995M1777.2 991.7L1778 990.9M1779.5 989.2L1780.5 988.2M1781.6 987L1783.6 985.1" stroke-width="1.1"/>
 <circle cx="1775.5" cy="993.4" r="2" fill="#e6f8f8" stroke-width="1.1"/>
 <path d="M1794.4 985.3L1799.6 1000.4M1798.2 996.3C1799.8 994.6 1803.2 995 1803.6 1000.4" stroke-width="1.1"/>
 <path d="M1799.6 1000.4L1803.6 1000.4" stroke-width="0.8"/>
 <path d="M1805 1000.4H1805.6M1808.4 1000.4H1809.2" stroke-width="1.1"/>
 <path d="M1820.5 985.2V1000.4H1835.7"/>
</g>
<path d="M1712.2 997Q1717 992.4 1722 997Q1717 1001.6 1712.2 997Z" fill="#22a3ae"/>
<circle cx="1717" cy="997" r="1.7" fill="#c5ded8"/>
<rect x="1732.8" y="985.8" width="4.6" height="4.6" fill="#fff" stroke="#22a3ae" stroke-width="1"/>
<path d="M1751.1 994.7L1754.4 991.1L1757.8 994.7" fill="none" stroke="#222" stroke-width="1"/>
<rect x="1821" y="994.9" width="5.6" height="5.5" fill="#fff"/>
<path d="M1820.5 994.9H1826.6V1000.4" fill="none" stroke="#22a3ae" stroke-width="1"/>
<path d="M1820.5 985.2V1000.4H1835.7" fill="none" stroke="#0f4c6e" stroke-width="1.2"/>
<rect x="1846" y="984.9" width="16" height="16" fill="#0f4c6e"/>
<g fill="#fff">
 <rect x="1847.2" y="986.1" width="2.7" height="2.8"/><rect x="1851.1" y="986.1" width="3" height="2.8"/><rect x="1855.1" y="986.1" width="2.9" height="2.8"/><rect x="1859" y="986.1" width="2.1" height="2.8"/>
 <rect x="1847.2" y="990.1" width="2.7" height="2.7"/><rect x="1851.1" y="990.1" width="3" height="2.7"/><rect x="1855.1" y="990.1" width="2.9" height="2.7"/><rect x="1859" y="990.1" width="2.1" height="2.7"/>
 <rect x="1847.2" y="994" width="2.7" height="2.8"/><rect x="1851.1" y="994" width="3" height="2.8"/><rect x="1855.1" y="994" width="2.9" height="2.8"/><rect x="1859" y="994" width="2.1" height="2.8"/>
 <rect x="1847.2" y="998" width="2.7" height="1.8"/><rect x="1851.1" y="998" width="3" height="1.8"/><rect x="1855.1" y="998" width="2.9" height="1.8"/><rect x="1859" y="998" width="2.1" height="1.8"/>
</g>
<rect x="1876.4" y="987.9" width="10.3" height="9.5" fill="#dff7f9"/>
<path d="M1876 987.3H1880.7M1886.5 994.2V996.8" stroke="#9ab8bc" stroke-width="0.8"/>
<path d="M1875 994.6V989" stroke="#22a3ae" stroke-width="1.8"/>
<path d="M1872 989.6L1875 986.3L1878 989.6Z" fill="#22a3ae"/>
<circle cx="1875" cy="998" r="1.6" fill="#7fc6c8" stroke="#0f4c6e" stroke-width="1.1"/>
<path d="M1878.2 998H1885" stroke="#e84040" stroke-width="1.7"/>
<path d="M1884.4 995.2L1888 998L1884.4 1000.8Z" fill="#e84040"/>
<rect x="1882.6" y="988.6" width="5" height="4" rx="0.7" fill="#fff" stroke="#22a3ae" stroke-width="1"/>
<path d="M1883.5 988.6V987.2A1.6 1.6 0 0 1 1886.7 987.2V988.6" fill="none" stroke="#22a3ae" stroke-width="1"/>
<rect x="1884.4" y="990.3" width="1.4" height="0.7" fill="#22a3ae"/>
<path d="M1903.69 985.49 L1907.11 985.49 L1907.42 987.89 L1908.72 988.64 L1910.96 987.72 L1912.67 990.68 L1910.75 992.15 L1910.75 993.65 L1912.67 995.12 L1910.96 998.08 L1908.72 997.16 L1907.42 997.91 L1907.11 1000.31 L1903.69 1000.31 L1903.38 997.91 L1902.08 997.16 L1899.84 998.08 L1898.13 995.12 L1900.05 993.65 L1900.05 992.15 L1898.13 990.68 L1899.84 987.72 L1902.08 988.64 L1903.38 987.89Z" fill="#9adbd9" stroke="#0f4c6e" stroke-width="1.2" stroke-linejoin="round"/>
<circle cx="1905.4" cy="992.9" r="2.3" fill="#f0f8f8" stroke="#0f4c6e" stroke-width="1.2"/>
<!-- window controls -->
<rect x="1864" y="16" width="6" height="2" fill="#111"/>
<path d="M1887 13V10.5H1892.2V15.5H1890" fill="none" stroke="#111" stroke-width="1.2"/>
<rect x="1886.4" y="10" width="6.2" height="1.8" fill="#111"/>
<rect x="1884.5" y="13.6" width="5" height="5" fill="none" stroke="#111" stroke-width="1.2"/>
<rect x="1884" y="13" width="6" height="1.8" fill="#111"/>
<path d="M1904 11.2L1911 18.2M1911 11.2L1904 18.2" stroke="#222" stroke-width="1.4"/>
</svg>
</body></html>
